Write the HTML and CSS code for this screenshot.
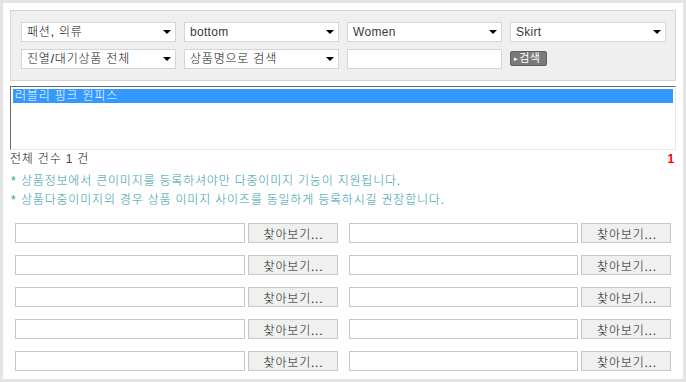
FILE: index.html
```html
<!DOCTYPE html>
<html lang="ko">
<head>
    <meta charset="UTF-8">
    <title>다중이미지 등록</title>
    <link rel="stylesheet" href="styles.css">
</head>
<body>
    <div class="frame">
        <div class="search-box">
            <div class="search-row">
                <div class="select-wrap"><select><option>패션, 의류</option></select></div>
                <div class="select-wrap"><select class="latin"><option>bottom</option></select></div>
                <div class="select-wrap"><select class="latin"><option>Women</option></select></div>
                <div class="select-wrap"><select class="latin"><option>Skirt</option></select></div>
            </div>
            <div class="search-row">
                <div class="select-wrap"><select><option>진열/대기상품 전체</option></select></div>
                <div class="select-wrap"><select><option>상품명으로 검색</option></select></div>
                <input type="text" class="keyword">
                <div><button type="button" class="search-btn"><span class="arrow">&#9656;</span>검색</button></div>
            </div>
        </div>

        <div class="product-list">
            <div class="product-item selected">러블리 핑크 원피스</div>
        </div>

        <div class="count-row">
            <span>전체 건수 <span class="num">1</span> 건</span>
            <span class="count-num">1</span>
        </div>

        <ul class="notes">
            <li>상품정보에서 큰이미지를 등록하셔야만 다중이미지 기능이 지원됩니다.</li>
            <li>상품다중이미지의 경우 상품 이미지 사이즈를 동일하게 등록하시길 권장합니다.</li>
        </ul>

        <div class="file-grid">
            <div class="file-field"><input type="text"><button type="button">찾아보기...</button></div>
            <div class="file-field"><input type="text"><button type="button">찾아보기...</button></div>
            <div class="file-field"><input type="text"><button type="button">찾아보기...</button></div>
            <div class="file-field"><input type="text"><button type="button">찾아보기...</button></div>
            <div class="file-field"><input type="text"><button type="button">찾아보기...</button></div>
            <div class="file-field"><input type="text"><button type="button">찾아보기...</button></div>
            <div class="file-field"><input type="text"><button type="button">찾아보기...</button></div>
            <div class="file-field"><input type="text"><button type="button">찾아보기...</button></div>
            <div class="file-field"><input type="text"><button type="button">찾아보기...</button></div>
            <div class="file-field"><input type="text"><button type="button">찾아보기...</button></div>
        </div>
    </div>
</body>
</html>
```

FILE: styles.css
```css
body {
    margin: 0;
    font-family: "Liberation Sans", "Noto Sans CJK KR", sans-serif;
    font-size: 12px;
    font-weight: 300;
    letter-spacing: 0.8px;
    color: #111;
    background: #fff;
}
.frame {
    box-sizing: border-box;
    width: 686px;
    height: 382px;
    border: 3px solid #e4e4e4;
    padding: 7px;
    background: #fff;
}
.search-box {
    background: #efefef;
    border: 1px solid #d4d4d4;
    padding: 11px 10px;
}
.search-row {
    display: grid;
    grid-template-columns: 155px 155px 155px 156px;
    column-gap: 8px;
    height: 20px;
    align-items: center;
}
.search-row + .search-row {
    margin-top: 7px;
}
.select-wrap {
    position: relative;
    height: 20px;
}
.select-wrap select {
    appearance: none;
    -webkit-appearance: none;
    box-sizing: border-box;
    width: 100%;
    height: 20px;
    margin: 0;
    padding: 0 0 0 5px;
    border: 1px solid #d2d6da;
    border-radius: 0;
    background: #fff;
    font-family: inherit;
    font-size: 12px;
    font-weight: 300;
    letter-spacing: 0.8px;
    color: #111;
    outline: none;
}
.select-wrap select.latin {
    letter-spacing: 0.3px;
    color: #3a3a3a;
}
.select-wrap::after {
    content: "";
    position: absolute;
    right: 5px;
    top: 8px;
    border-left: 4px solid transparent;
    border-right: 4px solid transparent;
    border-top: 4px solid #000;
    pointer-events: none;
}
.keyword {
    box-sizing: border-box;
    width: 100%;
    height: 20px;
    margin: 0;
    border: 1px solid #d2d6da;
    background: #fff;
    outline: none;
}
.search-btn {
    display: block;
    box-sizing: border-box;
    height: 15px;
    width: 37px;
    margin: -1px 0 0;
    padding: 0 0 0 3px;
    border: 1px solid #5f5f5f;
    border-radius: 2px;
    background: #7a7a7a;
    color: #fff;
    font-family: inherit;
    font-size: 11px;
    letter-spacing: 0.3px;
    line-height: 12px;
    text-align: left;
}
.search-btn .arrow {
    font-size: 7px;
    margin-right: 1px;
    vertical-align: 1px;
}
.product-list {
    box-sizing: border-box;
    height: 64px;
    margin-top: 5px;
    padding: 2px;
    border-top: 1px solid #666;
    border-left: 1px solid #666;
    border-right: 1px solid #e8e8e8;
    border-bottom: 1px solid #e8e8e8;
    background: #fff;
}
.product-item {
    height: 14px;
    line-height: 14px;
    padding-left: 2px;
}
.product-item.selected {
    background: #3399ff;
    color: #fff;
}
.count-row {
    display: flex;
    justify-content: space-between;
    height: 17px;
    line-height: 16px;
    margin-top: 1px;
}
.count-row .num {
    color: #444;
}
.count-num {
    color: #f00;
    font-weight: bold;
    padding-right: 1px;
}
.notes {
    list-style: none;
    margin: 4px 0 0;
    padding: 0;
    color: #2f9aa5;
}
.notes li {
    line-height: 19px;
}
.notes li::before {
    content: "*";
    display: inline-block;
    width: 10px;
    padding-left: 1px;
}
.file-grid {
    display: grid;
    grid-template-columns: 1fr 1fr;
    column-gap: 11px;
    row-gap: 12px;
    margin: 13px 5px 0;
}
.file-field {
    display: flex;
    gap: 3px;
    height: 20px;
}
.file-field input {
    flex: 1;
    min-width: 0;
    box-sizing: border-box;
    height: 20px;
    margin: 0;
    border: 1px solid #c8c8c8;
    background: #fff;
    outline: none;
}
.file-field button {
    box-sizing: border-box;
    width: 90px;
    height: 20px;
    margin: 0;
    padding: 0 0 0 2px;
    border: 1px solid #c8c8c8;
    background: #f0f0f0;
    font-family: inherit;
    font-size: 12px;
    font-weight: 300;
    letter-spacing: 0.8px;
    color: #111;
}
```
